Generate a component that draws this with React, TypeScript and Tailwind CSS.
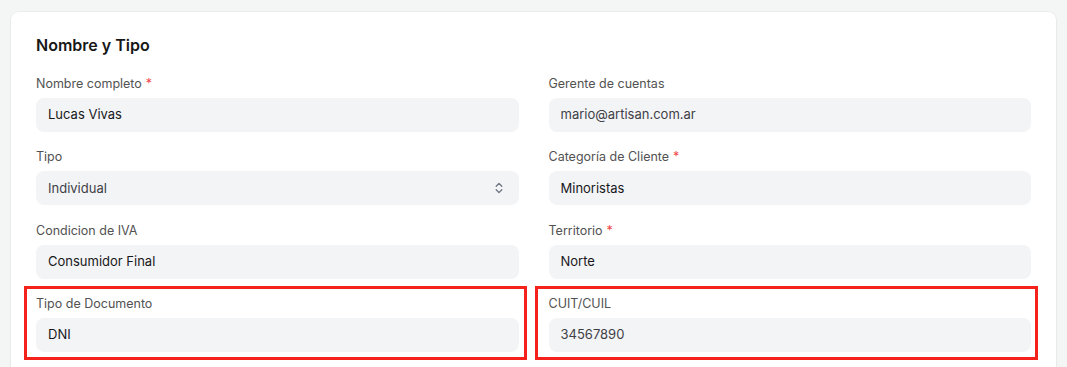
type Field = {
  label: string;
  value: string;
  required?: boolean;
  select?: boolean;
  muted?: boolean;
};

const rows: Field[][] = [
  [
    { label: "Nombre completo", value: "Lucas Vivas", required: true },
    { label: "Gerente de cuentas", value: "mario@artisan.com.ar", muted: true },
  ],
  [
    { label: "Tipo", value: "Individual", select: true, muted: true },
    { label: "Categoría de Cliente", value: "Minoristas", required: true },
  ],
  [
    { label: "Condicion de IVA", value: "Consumidor Final" },
    { label: "Territorio", value: "Norte", required: true },
  ],
];

function UpDown() {
  return (
    <svg width="8" height="12" viewBox="0 0 8 12" fill="none" className="text-[#6b7280]">
      <path d="M1.2 4.2 L4 1.4 L6.8 4.2" stroke="currentColor" strokeWidth="1.3" strokeLinecap="round" strokeLinejoin="round" />
      <path d="M1.2 7.8 L4 10.6 L6.8 7.8" stroke="currentColor" strokeWidth="1.3" strokeLinecap="round" strokeLinejoin="round" />
    </svg>
  );
}

function FormField({ field }: { field: Field }) {
  return (
    <div>
      <label className="block text-[12.5px] leading-5 text-[#525252] mb-1">
        {field.label}
        {field.required && <span className="text-[#ef4444] ml-1">*</span>}
      </label>
      <div
        className={
          field.muted
            ? "h-[34px] rounded-lg bg-[#f3f4f6] pl-3 pr-4 flex items-center justify-between text-[13px] text-[#3f3f46]"
            : "h-[34px] rounded-lg bg-[#f3f4f6] pl-3 pr-4 flex items-center justify-between text-[13px] text-[#18181b]"
        }
      >
        <span>{field.value}</span>
        {field.select && <UpDown />}
      </div>
    </div>
  );
}

export default function App() {
  return (
    <div className="min-h-screen bg-[#f4f5f5] pt-3 px-[11px] font-['Inter',sans-serif]">
      {/* CARD */}
      <div className="bg-white rounded-lg shadow-[0_0_0_1px_rgba(0,0,0,0.03),0_1px_3px_rgba(0,0,0,0.04)] px-[25px] pt-[21px] pb-10">
        <h2 className="text-base leading-6 font-semibold text-[#171717] mb-[17px]">Nombre y Tipo</h2>

        <div className="grid grid-cols-2 gap-x-[30px] gap-y-[15.33px]">
          {rows.map((row) =>
            row.map((f) => <FormField key={f.label} field={f} />)
          )}

          {/* HIGHLIGHTED ROW */}
          <div className="relative">
            <FormField field={{ label: "Tipo de Documento", value: "DNI" }} />
            <span className="absolute -top-2 -bottom-2 -left-3 -right-2 border-[3px] border-[#f5211b]"></span>
          </div>
          <div className="relative">
            <FormField field={{ label: "CUIT/CUIL", value: "34567890", muted: true }} />
            <span className="absolute -top-2 -bottom-2 -left-[14px] -right-[7px] border-[3px] border-[#f5211b]"></span>
          </div>
        </div>
      </div>
    </div>
  );
}
